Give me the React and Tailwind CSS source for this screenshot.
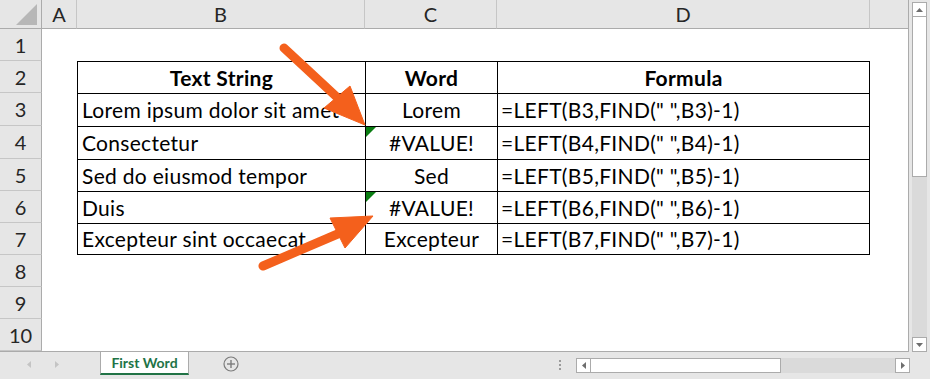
import React from "react";

// column widths of the sheet, left to right: A, B, C, D, E (partly seen)
const rowHeights = [32, 32, 33, 33, 32, 32, 32, 32, 32, 32];

const tableRows = {
  2: { b: "Text String", c: "Word", d: "Formula", head: true },
  3: { b: "Lorem ipsum dolor sit amet", c: "Lorem", d: '=LEFT(B3,FIND(" ",B3)-1)' },
  4: { b: "Consectetur", c: "#VALUE!", d: '=LEFT(B4,FIND(" ",B4)-1)', flag: true },
  5: { b: "Sed do eiusmod tempor", c: "Sed", d: '=LEFT(B5,FIND(" ",B5)-1)' },
  6: { b: "Duis", c: "#VALUE!", d: '=LEFT(B6,FIND(" ",B6)-1)', flag: true },
  7: { b: "Excepteur sint occaecat", c: "Excepteur", d: '=LEFT(B7,FIND(" ",B7)-1)' },
};

const ColumnHeader = () => (
  <div className="flex h-[29px] bg-[#e6e6e6] text-[#262626] text-[20px] tracking-normal">
    <div className="w-[42px] border-r border-b border-[#ababab] flex items-end justify-end pr-[3px] pb-[2px]">
      <svg width="22" height="22" viewBox="0 0 22 22">
        <polygon points="21,0 21,21 0,21" fill="#b7b7b7" />
      </svg>
    </div>
    {[
      ["A", "w-[35px]"],
      ["B", "w-[288px]"],
      ["C", "w-[132px]"],
      ["D", "w-[373px]"],
      ["", "w-[38px]"],
    ].map(([label, w], i) => (
      <div
        key={i}
        className={`${w} border-b border-[#ababab] ${i < 4 ? "border-r border-r-[#c6c6c6]" : ""} flex items-center justify-center`}
      >
        {label}
      </div>
    ))}
  </div>
);

const SheetRow = ({ n, h }) => {
  const row = tableRows[n];
  const last = n === 7;
  const cellBorder = `border-l border-t border-black ${last ? "border-b" : ""}`;
  return (
    <div className={`flex ${h === 33 ? "h-[33px]" : "h-[32px]"}`}>
      <div className="w-[42px] bg-[#e6e6e6] border-r border-[#ababab] border-b border-b-[#c6c6c6] flex items-center justify-center text-[#262626] text-[20px] tracking-normal">
        {n}
      </div>
      <div className="w-[35px]" />
      {row ? (
        <>
          <div
            className={`w-[288px] ${cellBorder} flex items-center whitespace-nowrap overflow-hidden ${row.head ? "justify-center font-bold" : "pl-[4px]"}`}
          >
            {row.b}
          </div>
          <div
            className={`relative w-[132px] ${cellBorder} flex items-center justify-center whitespace-nowrap ${row.head ? "font-bold" : ""}`}
          >
            {row.flag && (
              <svg className="absolute left-0 top-0" width="10" height="10" viewBox="0 0 10 10">
                <polygon points="0,0 10,0 0,10" fill="#0a7d12" />
              </svg>
            )}
            {row.c}
          </div>
          <div
            className={`w-[373px] ${cellBorder} border-r flex items-center whitespace-nowrap ${row.head ? "justify-center font-bold" : "pl-[3px]"}`}
          >
            {row.d}
          </div>
        </>
      ) : (
        <div className="w-[793px]" />
      )}
      <div className="w-[38px]" />
    </div>
  );
};

const Arrows = () => (
  <svg className="absolute left-0 top-0 pointer-events-none" width="909" height="352">
    <g fill="#f4601c" stroke="#f4601c">
      <line x1="284" y1="48" x2="340" y2="100" strokeWidth="9" strokeLinecap="round" />
      <polygon points="324,108 350,86 365,125" strokeWidth="1" strokeLinejoin="round" />
      <line x1="263" y1="266" x2="340" y2="233" strokeWidth="9" strokeLinecap="round" />
      <polygon points="330,218 345,248 373,216" strokeWidth="1" strokeLinejoin="round" />
    </g>
  </svg>
);

const VScroll = () => (
  <div className="ml-[3px] w-[15px] pt-[2px] flex flex-col">
    <div className="h-[15px] bg-white border border-[#ababab] flex items-center justify-center">
      <svg width="7" height="4" viewBox="0 0 7 4">
        <polygon points="3.5,0 7,4 0,4" fill="#6e6e6e" />
      </svg>
    </div>
    <div className="h-[160px] bg-white border border-t-0 border-[#ababab]" />
    <div className="flex-1 bg-[#dadada]" />
    <div className="h-[15px] bg-white border border-[#ababab] flex items-center justify-center">
      <svg width="7" height="4" viewBox="0 0 7 4">
        <polygon points="0,0 7,0 3.5,4" fill="#6e6e6e" />
      </svg>
    </div>
  </div>
);

const TabBar = () => (
  <div className="flex h-[27px] items-start tracking-normal">
    <div className="w-[100px] h-[24px] flex items-center">
      <svg className="ml-[27px]" width="4" height="7" viewBox="0 0 4 7">
        <polygon points="4,0 4,7 0,3.5" fill="#c4c4c4" />
      </svg>
      <svg className="ml-[24px]" width="4" height="7" viewBox="0 0 4 7">
        <polygon points="0,0 0,7 4,3.5" fill="#c4c4c4" />
      </svg>
    </div>
    <div className="-mt-px w-[89px] h-[24px] bg-white border-x border-[#ababab] border-b-2 border-b-[#217346] flex items-center justify-center text-[14px] font-bold text-[#217346]">
      First Word
    </div>
    <div className="ml-[34px] h-[24px] flex items-center">
      <svg width="16" height="16" viewBox="0 0 16 16">
        <circle cx="8" cy="8" r="7" fill="none" stroke="#7b7b7b" strokeWidth="1.2" />
        <line x1="8" y1="4" x2="8" y2="12" stroke="#7b7b7b" strokeWidth="1.4" />
        <line x1="4" y1="8" x2="12" y2="8" stroke="#7b7b7b" strokeWidth="1.4" />
      </svg>
    </div>
    <div className="ml-[320px] mt-[8px] flex flex-col gap-[2px]">
      <div className="w-[2px] h-[2px] bg-[#9a9a9a]" />
      <div className="w-[2px] h-[2px] bg-[#9a9a9a]" />
      <div className="w-[2px] h-[2px] bg-[#9a9a9a]" />
    </div>
    <div className="ml-[15px] mt-[6px] w-[334px] h-[15px] flex">
      <div className="w-[15px] bg-white border border-[#ababab] flex items-center justify-center">
        <svg width="4" height="7" viewBox="0 0 4 7">
          <polygon points="4,0 4,7 0,3.5" fill="#6e6e6e" />
        </svg>
      </div>
      <div className="w-[190px] bg-white border border-l-0 border-[#ababab]" />
      <div className="flex-1 bg-[#dadada]" />
      <div className="w-[15px] bg-white border border-[#ababab] flex items-center justify-center">
        <svg width="4" height="7" viewBox="0 0 4 7">
          <polygon points="0,0 0,7 4,3.5" fill="#6e6e6e" />
        </svg>
      </div>
    </div>
  </div>
);

export default function App() {
  return (
    <div className="w-[930px] h-[379px] bg-[#e6e6e6] overflow-hidden font-['Lato',sans-serif] text-[21px] tracking-[0.3px] text-black">
      <div className="flex">
        <div className="relative w-[909px] h-[352px] bg-white border-r border-b border-[#ababab]">
          <ColumnHeader />
          {rowHeights.map((h, i) => (
            <SheetRow key={i} n={i + 1} h={h} />
          ))}
          <Arrows />
        </div>
        <VScroll />
      </div>
      <TabBar />
    </div>
  );
}
